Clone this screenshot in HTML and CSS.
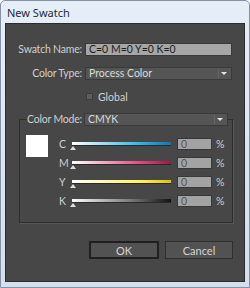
FILE: index.html
```html
<!DOCTYPE html>
<html lang="en">
<head>
    <meta charset="UTF-8">
    <title>New Swatch</title>
    <link rel="stylesheet" href="styles.css">
</head>
<body>

    <div class="window">
        <div class="titlebar">New Swatch</div>

        <div class="dialog">
            <div class="form">
                <label class="label">Swatch Name:</label>
                <div class="textbox">C=0 M=0 Y=0 K=0</div>

                <label class="label">Color Type:</label>
                <div class="dropdown">Process Color</div>

                <span></span>
                <div class="check"><span class="box"></span>Global</div>
            </div>

            <fieldset class="group">
                <legend>
                    <div class="group-head">
                        <label class="label">Color Mode:</label>
                        <div class="dropdown mode">CMYK</div>
                    </div>
                </legend>
                <div class="group-body">
                    <div class="swatch"></div>
                    <div class="channels">
                        <div class="channel">
                            <span class="letter">C</span>
                            <div class="slider"><div class="track cyan"></div><span class="thumb"></span></div>
                            <div class="value">0</div>
                            <span class="pct">%</span>
                        </div>
                        <div class="channel">
                            <span class="letter">M</span>
                            <div class="slider"><div class="track magenta"></div><span class="thumb"></span></div>
                            <div class="value">0</div>
                            <span class="pct">%</span>
                        </div>
                        <div class="channel">
                            <span class="letter">Y</span>
                            <div class="slider"><div class="track yellow"></div><span class="thumb"></span></div>
                            <div class="value">0</div>
                            <span class="pct">%</span>
                        </div>
                        <div class="channel">
                            <span class="letter">K</span>
                            <div class="slider"><div class="track black"></div><span class="thumb"></span></div>
                            <div class="value">0</div>
                            <span class="pct">%</span>
                        </div>
                    </div>
                </div>
            </fieldset>

            <div class="buttons">
                <button class="btn default">OK</button>
                <button class="btn">Cancel</button>
            </div>
        </div>
    </div>

</body>
</html>
```

FILE: styles.css
```css
body {
    margin: 0;
    font-family: Lato, "Noto Sans", sans-serif;
    font-size: 10.5px;
    background: #fff;
}
.window {
    width: 250px;
    height: 288px;
    box-sizing: border-box;
    border: 1px solid #8492a3;
    border-radius: 5px 5px 0 0;
    background: linear-gradient(#e6eef8, #d3dfee);
    padding: 0 4px 5px;
    display: flex;
    flex-direction: column;
}
.titlebar {
    height: 22px;
    line-height: 24px;
    padding-left: 2px;
    font-family: "Noto Sans", sans-serif;
    font-size: 11px;
    color: #1e2a36;
}
.dialog {
    flex: 1;
    background: #474747;
    border: 1px solid #2c2c2c;
}
.form {
    display: grid;
    grid-template-columns: 73px 147px;
    grid-auto-rows: 13px;
    column-gap: 3px;
    row-gap: 11px;
    padding: 19px 0 0 3px;
}
.label {
    color: #cfcfcf;
    text-align: right;
    line-height: 13px;
    white-space: nowrap;
    letter-spacing: -0.2px;
}
.textbox {
    background: #a6a6a6;
    color: #1c1c1c;
    border: 1px solid #393939;
    line-height: 11px;
    padding-left: 3px;
}
.dropdown {
    position: relative;
    background: #555;
    color: #dadada;
    border: 1px solid #3a3a3a;
    line-height: 11px;
    padding-left: 3px;
}
.dropdown::after {
    content: "";
    position: absolute;
    right: 4px;
    top: 4px;
    border-left: 3px solid transparent;
    border-right: 3px solid transparent;
    border-top: 3px solid #e6e6e6;
}
.dropdown::before {
    content: "";
    position: absolute;
    right: 12px;
    top: 1px;
    bottom: 1px;
    width: 1px;
    background: #666;
}
.check {
    display: flex;
    align-items: center;
    gap: 5px;
    color: #cfcfcf;
    margin: -2px 0 0 1px;
}
.box {
    width: 5px;
    height: 5px;
    background: #5d5d5d;
    border: 1px solid #3c3c3c;
}
.group {
    margin: 9px 11px 0 13px;
    padding: 0 0 15px;
    border: 1px solid #2e2e2e;
    box-shadow: 1px 1px 0 #575757;
}
.group legend {
    margin-left: 7px;
    padding: 0;
}
.group-head {
    display: flex;
    gap: 2px;
}
.mode {
    width: 139px;
    height: 11px;
}
.group-body {
    display: flex;
    align-items: flex-start;
    padding-top: 9px;
}
.swatch {
    width: 22px;
    height: 22px;
    margin-left: 6px;
    background: #fff;
}
.channels {
    margin-left: 11px;
    padding-top: 3px;
    display: flex;
    flex-direction: column;
    gap: 7px;
}
.channel {
    display: flex;
    align-items: center;
    height: 12px;
}
.letter {
    width: 13px;
    color: #cfcfcf;
}
.slider {
    position: relative;
    width: 99px;
    height: 12px;
}
.track {
    margin-top: 4px;
    height: 3px;
    border-bottom: 1px solid #2a2a2a;
}
.cyan { background: linear-gradient(to right, #fff, #29b6ea 70%, #1673b0); }
.magenta { background: linear-gradient(to right, #fff, #e2457d 70%, #9a1946); }
.yellow { background: linear-gradient(to right, #fff, #fff35a 70%, #d9c400); }
.black { background: linear-gradient(to right, #fff, #777 60%, #111); }
.thumb {
    position: absolute;
    left: -2px;
    top: 8px;
    border-left: 3px solid transparent;
    border-right: 3px solid transparent;
    border-bottom: 4px solid #ddd;
}
.value {
    width: 30px;
    height: 10px;
    margin-left: 6px;
    background: #a3a3a3;
    border: 1px solid #383838;
    color: #555;
    line-height: 10px;
    padding-left: 3px;
}
.pct {
    margin-left: 4px;
    color: #cfcfcf;
}
.buttons {
    display: flex;
    justify-content: flex-end;
    gap: 6px;
    margin-top: 18px;
    padding-right: 11px;
}
.btn {
    width: 68px;
    height: 18px;
    padding: 0;
    font-family: Lato, "Noto Sans", sans-serif;
    font-size: 11px;
    color: #d4d4d4;
    background: #525252;
    border: 1px solid #2f2f2f;
}
.btn.default {
    width: 70px;
    border: 2px solid #1f1f1f;
}
```
